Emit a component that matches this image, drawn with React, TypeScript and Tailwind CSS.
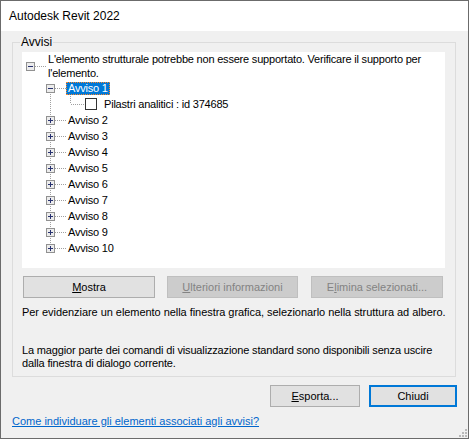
import React from "react";

const F = "font-['Liberation_Sans',Arial,sans-serif]";

function Box({ x, y, minus }: { x: number; y: number; minus?: boolean }) {
  return (
    <g>
      <rect x={x + 0.5} y={y + 0.5} width={8} height={8} fill="#ececec" stroke="#919191" />
      <line x1={x + 2} y1={y + 4.5} x2={x + 7} y2={y + 4.5} stroke="#283270" />
      {!minus && <line x1={x + 4.5} y1={y + 2} x2={x + 4.5} y2={y + 7} stroke="#283270" />}
    </g>
  );
}

const dot = { stroke: "#a0a0a0", strokeDasharray: "1 1" };

function AvvisoRow({ n, selected, last, first }: { n: number; selected?: boolean; last?: boolean; first?: boolean }) {
  return (
    <div className="flex h-[16px]">
      <svg width={44} height={16} className="shrink-0">
        <line x1={28.5} y1={first ? 8 : 0} x2={28.5} y2={last ? 8 : 16} {...dot} />
        <line x1={33} y1={8.5} x2={44} y2={8.5} {...dot} />
        <Box x={24} y={4} minus={selected} />
      </svg>
      <span
        className={
          "mt-[2px] h-[13px] px-[1px] leading-[11px] border " +
          (selected ? "bg-[#0078d7] text-white border-dotted border-[#ff8728]" : "border-transparent text-black")
        }
      >
        Avviso {n}
      </span>
    </div>
  );
}

export default function App() {
  const rest = [2, 3, 4, 5, 6, 7, 8, 9, 10];
  return (
    <div className={`w-[469px] h-[439px] border border-[#6b6b6b] bg-[#f0f0f0] flex flex-col ${F} text-[11px] text-black`}>
      {/* barra del titolo */}
      <div className="h-[30px] bg-white flex items-center pl-[8px] text-[12px]">Autodesk Revit 2022</div>

      <div className="flex-1 flex flex-col pt-[11px] pl-[11px]">
        {/* gruppo Avvisi */}
        <div className="relative w-[444px] h-[335px] border border-[#dcdcdc] pt-[9px] pl-[9px]">
          <span className="absolute -top-[8px] left-[7px] px-[1px] bg-[#f0f0f0] text-[12px] leading-[14px]">Avvisi</span>

          <div className="w-[423px] h-[216px] bg-white overflow-hidden tracking-[-0.2px]">
            <div className="flex h-[28px]">
              <svg width={26} height={28} className="shrink-0">
                <line x1={13} y1={14.5} x2={25} y2={14.5} {...dot} />
                <Box x={4} y={10} minus />
              </svg>
              <div className="leading-[14px] whitespace-nowrap">
                L'elemento strutturale potrebbe non essere supportato. Verificare il supporto per
                <br />
                l'elemento.
              </div>
            </div>
            <AvvisoRow n={1} selected first />
            <div className="flex h-[16px]">
              <svg width={82} height={16} className="shrink-0">
                <line x1={28.5} y1={0} x2={28.5} y2={16} {...dot} />
                <line x1={48.5} y1={0} x2={48.5} y2={8} {...dot} />
                <line x1={49} y1={8.5} x2={63} y2={8.5} {...dot} />
                <rect x={63.5} y={2.5} width={11} height={11} fill="#fff" stroke="#333" />
              </svg>
              <span className="leading-[16px]">Pilastri analitici : id 374685</span>
            </div>
            {rest.map((n) => (
              <AvvisoRow key={n} n={n} last={n === 10} />
            ))}
          </div>

          <div className="flex mt-[8px] ml-[1px] gap-[12px] text-[11px]">
            <button className="w-[132px] h-[22px] bg-[#e1e1e1] border border-[#adadad]">
              <u>M</u>ostra
            </button>
            <button className="w-[131px] h-[22px] bg-[#cccccc] border border-[#bfbfbf] text-[#838383]">
              <u>U</u>lteriori informazioni
            </button>
            <button className="w-[132px] h-[22px] ml-[1px] bg-[#cccccc] border border-[#bfbfbf] text-[#838383]">
              E<u>l</u>imina selezionati...
            </button>
          </div>

          <p className="mt-[6px] leading-[16px] tracking-[-0.05px]">
            Per evidenziare un elemento nella finestra grafica, selezionarlo nella struttura ad albero.
          </p>
          <p className="mt-[24px] leading-[13px] tracking-[-0.15px]">
            La maggior parte dei comandi di visualizzazione standard sono disponibili senza uscire
            <br />
            dalla finestra di dialogo corrente.
          </p>
        </div>

        <div className="flex justify-end gap-[9px] mt-[8px] pr-[11px]">
          <button className="w-[90px] h-[22px] bg-[#e1e1e1] border border-[#adadad]">
            <u>E</u>sporta...
          </button>
          <button className="w-[88px] h-[22px] bg-[#e1e1e1] border-2 border-[#0078d7]">Chiudi</button>
        </div>

        <div className="flex-1 flex items-end justify-between pr-[1px] pb-[1px]">
          <a className="mb-[8px] text-[#0066cc] underline">Come individuare gli elementi associati agli avvisi?</a>
          <svg width={8} height={8}>
            <rect x={6} y={0} width={2} height={2} fill="#b8b8b8" />
            <rect x={3} y={3} width={2} height={2} fill="#b8b8b8" />
            <rect x={6} y={3} width={2} height={2} fill="#b8b8b8" />
            <rect x={0} y={6} width={2} height={2} fill="#b8b8b8" />
            <rect x={3} y={6} width={2} height={2} fill="#b8b8b8" />
            <rect x={6} y={6} width={2} height={2} fill="#b8b8b8" />
          </svg>
        </div>
      </div>
    </div>
  );
}
